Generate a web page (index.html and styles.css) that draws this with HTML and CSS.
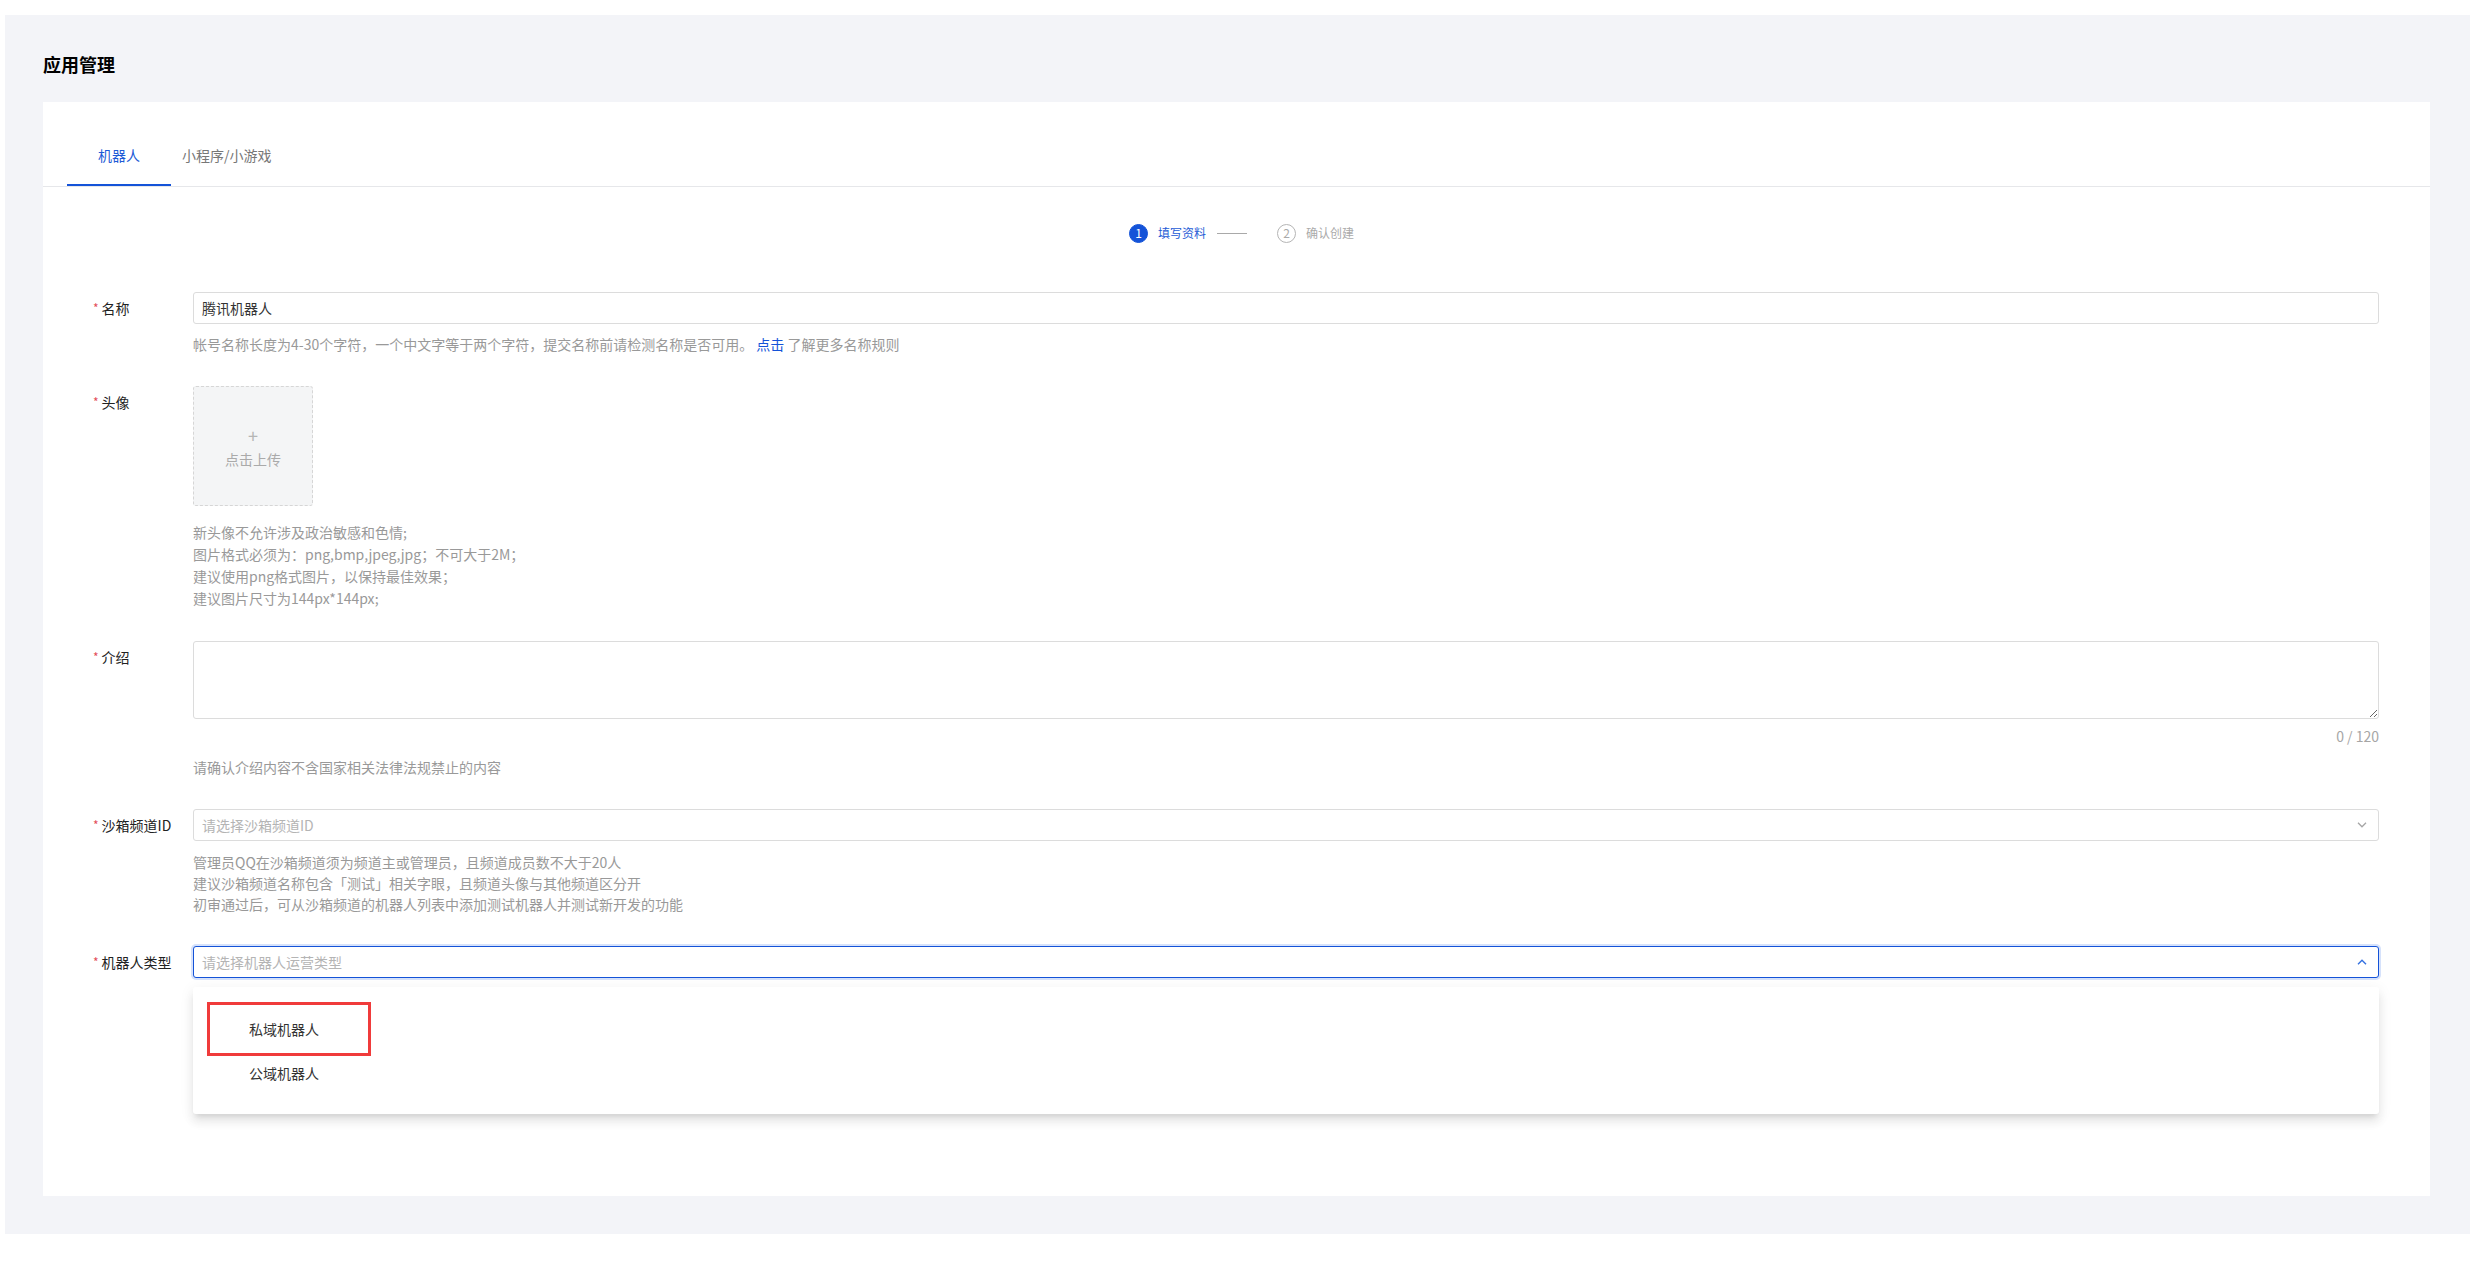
FILE: index.html
```html
<!DOCTYPE html>
<html lang="zh-CN">
<head>
<meta charset="utf-8">
<title>应用管理</title>
<link rel="stylesheet" href="styles.css">
</head>
<body>
<div class="page">
  <h1 class="page-title">应用管理</h1>
  <div class="card">
    <div class="tabs">
      <div class="tab active">机器人</div>
      <div class="tab">小程序/小游戏</div>
    </div>

    <div class="steps">
      <div class="step current"><span class="step-num">1</span><span class="step-text">填写资料</span></div>
      <span class="step-line"></span>
      <div class="step"><span class="step-num">2</span><span class="step-text">确认创建</span></div>
    </div>

    <div class="form">
      <div class="field f-name">
        <div class="field-label"><span class="req">*</span>名称</div>
        <div class="field-body">
          <div class="input"><span class="value">腾讯机器人</span></div>
          <div class="help help-name">帐号名称长度为4-30个字符，一个中文字等于两个字符，提交名称前请检测名称是否可用。 <a class="link">点击</a> 了解更多名称规则</div>
        </div>
      </div>

      <div class="field f-avatar">
        <div class="field-label"><span class="req">*</span>头像</div>
        <div class="field-body">
          <div class="upload">
            <span class="upload-plus">+</span>
            <span class="upload-text">点击上传</span>
          </div>
          <div class="help help-avatar">
            <div>新头像不允许涉及政治敏感和色情;</div>
            <div>图片格式必须为：png,bmp,jpeg,jpg；不可大于2M；</div>
            <div>建议使用png格式图片，以保持最佳效果；</div>
            <div>建议图片尺寸为144px*144px;</div>
          </div>
        </div>
      </div>

      <div class="field f-intro">
        <div class="field-label"><span class="req">*</span>介绍</div>
        <div class="field-body">
          <textarea class="textarea"></textarea>
          <div class="counter">0 / 120</div>
          <div class="help help-intro">请确认介绍内容不含国家相关法律法规禁止的内容</div>
        </div>
      </div>

      <div class="field f-sandbox">
        <div class="field-label"><span class="req">*</span>沙箱频道ID</div>
        <div class="field-body">
          <div class="input select">
            <span class="placeholder">请选择沙箱频道ID</span>
            <svg class="chevron" width="10" height="6" viewBox="0 0 10 6"><path d="M1 0.8l4 4 4-4" fill="none" stroke="#a6a6a6" stroke-width="1.3"/></svg>
          </div>
          <div class="help help-sandbox">
            <div>管理员QQ在沙箱频道须为频道主或管理员，且频道成员数不大于20人</div>
            <div>建议沙箱频道名称包含「测试」相关字眼，且频道头像与其他频道区分开</div>
            <div>初审通过后，可从沙箱频道的机器人列表中添加测试机器人并测试新开发的功能</div>
          </div>
        </div>
      </div>

      <div class="field f-type">
        <div class="field-label"><span class="req">*</span>机器人类型</div>
        <div class="field-body">
          <div class="select-wrap">
            <div class="input select focused">
              <span class="placeholder">请选择机器人运营类型</span>
              <svg class="chevron" width="10" height="6" viewBox="0 0 10 6"><path d="M1 5.2l4-4 4 4" fill="none" stroke="#3370e0" stroke-width="1.4"/></svg>
            </div>
            <div class="dropdown">
              <div class="option">私域机器人</div>
              <div class="option">公域机器人</div>
              <div class="mark"></div>
            </div>
          </div>
        </div>
      </div>
    </div>
  </div>
</div>
</body>
</html>
```

FILE: styles.css
```css
* { box-sizing: border-box; }

html, body {
  margin: 0;
  padding: 0;
  background: #ffffff;
  font-family: "Noto Sans CJK SC", "Noto Sans", sans-serif;
  color: #000;
}

.page {
  margin: 15px 5px 0 5px;
  height: 1219px;
  background: #f3f4f8;
  padding: 36px 40px 38px 38px;
}

.page-title {
  margin: 0;
  font-size: 18px;
  line-height: 26px;
  font-weight: 700;
  color: #000;
}

.card {
  margin-top: 25px;
  background: #fff;
  height: 1094px;
}

/* tabs */
.tabs {
  display: flex;
  height: 85px;
  padding-left: 24px;
  border-bottom: 1px solid #e6e7ea;
}
.tab {
  position: relative;
  padding-top: 42px;
  font-size: 14px;
  line-height: 22px;
  color: #777;
  height: 84px;
}
.tab.active {
  padding-left: 31px;
  padding-right: 31px;
  color: #1d5bd6;
}
.tab.active::after {
  content: "";
  position: absolute;
  left: 0;
  right: 0;
  bottom: 0;
  height: 2px;
  background: #1453d8;
}
.tab + .tab {
  padding-left: 11px;
}

/* steps */
.steps {
  display: flex;
  align-items: center;
  justify-content: center;
  margin-top: 36px;
  height: 20px;
  padding-left: 10px;
  font-size: 12px;
}
.step {
  display: flex;
  align-items: center;
  color: #aaa;
}
.step-num {
  width: 19px;
  height: 19px;
  border-radius: 50%;
  border: 1px solid #b5b5b5;
  display: flex;
  align-items: center;
  justify-content: center;
  font-size: 12px;
  line-height: 1;
  color: #aaa;
}
.step.current .step-num {
  background: #1453d8;
  border-color: #1453d8;
  color: #fff;
}
.step-text {
  margin-left: 10px;
  line-height: 20px;
}
.step.current .step-text {
  color: #1d5bd6;
}
.step-line {
  width: 30px;
  height: 1px;
  background: #a9a9a9;
  margin: 0 30px 0 11px;
}

/* form */
.form {
  margin-top: 49px;
  padding: 0 51px 0 50px;
}
.field {
  display: flex;
}
.field-label {
  width: 100px;
  flex: none;
  font-size: 14px;
  line-height: 32px;
  color: #222;
}
.req {
  color: #e34d59;
  font-size: 12px;
  margin-right: 3px;
  vertical-align: 1px;
}
.field-body {
  flex: 1;
  min-width: 0;
}

.input {
  height: 32px;
  border: 1px solid #dcdcdc;
  border-radius: 3px;
  background: #fff;
  display: flex;
  align-items: center;
  padding: 0 8px;
  font-size: 14px;
  color: #333;
}
.value { color: #333; }
.placeholder { color: #b4b4b4; }

.select {
  justify-content: space-between;
  padding-right: 11px;
}
.select.focused {
  border-color: #1453d8;
  box-shadow: 0 0 0 2px #d6e2fb;
}

.help {
  font-size: 14px;
  line-height: 22px;
  color: #999;
}
.link { color: #1453d8; }

.help-name { margin-top: 9px; }
.f-name { margin-bottom: 31px; }

.upload {
  width: 120px;
  height: 120px;
  border: 1px dashed #d6d6d6;
  border-radius: 3px;
  background: #f4f5f6;
  display: flex;
  flex-direction: column;
  align-items: center;
  justify-content: center;
  color: #aaa;
  font-size: 14px;
}
.upload-plus {
  font-size: 18px;
  line-height: 18px;
  margin-top: 4px;
  color: #b5b5b5;
}
.upload-text {
  line-height: 22px;
  margin-top: 4px;
}
.help-avatar { margin-top: 15px; }
.f-avatar { margin-bottom: 32px; }

.textarea {
  display: block;
  width: 100%;
  height: 78px;
  border: 1px solid #dcdcdc;
  border-radius: 3px;
  resize: vertical;
  font-family: inherit;
  font-size: 14px;
  margin: 0;
  outline: none;
}
.counter {
  margin-top: 6px;
  text-align: right;
  font-size: 14px;
  line-height: 22px;
  color: #a6a6a6;
}
.help-intro { margin-top: 9px; }
.f-intro { margin-bottom: 31px; }

.help-sandbox {
  margin-top: 11px;
  line-height: 21px;
}
.f-sandbox { margin-bottom: 31px; }

.select-wrap {
  position: relative;
}
.dropdown {
  position: absolute;
  left: 0;
  right: 0;
  top: 41px;
  height: 127px;
  background: #fff;
  border-radius: 3px;
  padding: 20px 0;
  box-shadow: 0 3px 14px 2px rgba(0,0,0,0.05), 0 8px 10px 1px rgba(0,0,0,0.06), 0 5px 5px -3px rgba(0,0,0,0.1);
  z-index: 2;
}
.option {
  height: 44px;
  line-height: 44px;
  padding-left: 56px;
  font-size: 14px;
  color: #333;
}
.mark {
  position: absolute;
  left: 14px;
  top: 15px;
  width: 164px;
  height: 54px;
  border: 3px solid #f03b3b;
}
```
